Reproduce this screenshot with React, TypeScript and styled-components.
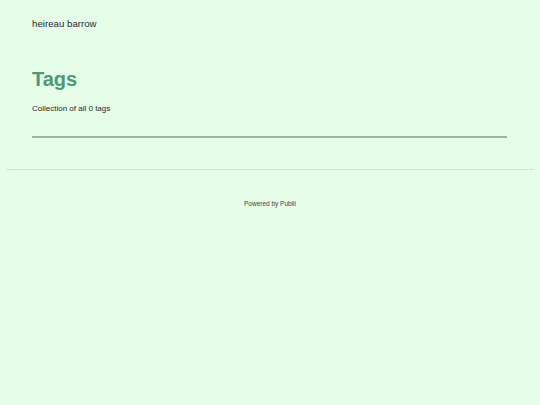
import styled, { createGlobalStyle } from "styled-components";

const GlobalStyle = createGlobalStyle`
  html, body {
    margin: 0;
    padding: 0;
    background: #e6fde8;
    font-family: "Liberation Sans", Arial, sans-serif;
    color: #222;
  }
`;

const App = () => {
  return (
    <Page>
      <GlobalStyle />
      <Header>
        <Logo>heireau barrow</Logo>
      </Header>
      <Main>
        <Title>Tags</Title>
        <Description>Collection of all 0 tags</Description>
        <Divider />
      </Main>
      <Footer>
        <Powered>Powered by Publii</Powered>
      </Footer>
    </Page>
  );
};

const Page = styled.div`
  min-height: 405px;
  background: #e6fde8;
`;

const Header = styled.header`
  padding: 18px 33px 0 32px;
  height: 40px;
  box-sizing: border-box;
`;

const Logo = styled.div`
  font-size: 9.7px;
  line-height: 12px;
  color: #2a2a2a;
`;

const Main = styled.main`
  padding: 27px 33px 0 32px;
`;

const Title = styled.h1`
  margin: 0;
  font-size: 20px;
  line-height: 24px;
  font-weight: 700;
  color: #4a9a78;
`;

const Description = styled.p`
  margin: 13px 0 0;
  font-size: 8px;
  line-height: 10px;
  color: #2a2a2a;
`;

const Divider = styled.hr`
  margin: 22px 0 0;
  border: 0;
  height: 2px;
  background: #9cb3a2;
`;

const Footer = styled.footer`
  margin: 31px 6px 0;
  border-top: 1px solid #cfe3d2;
  padding-top: 30px;
  text-align: center;
`;

const Powered = styled.div`
  font-size: 6.5px;
  line-height: 8px;
  color: #444;
`;

export default App;
